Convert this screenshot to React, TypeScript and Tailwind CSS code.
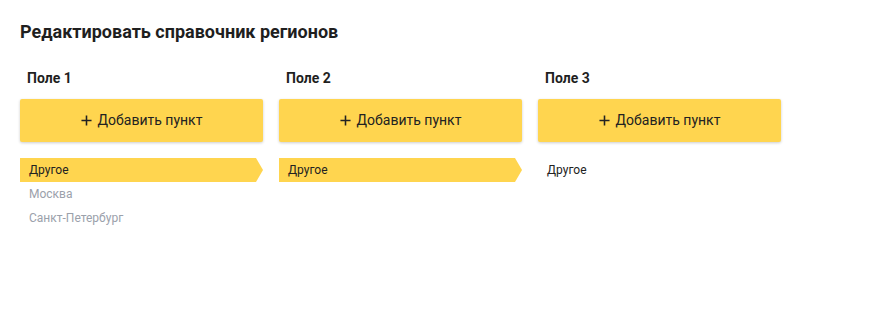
const COLUMNS = [
  { title: "Поле 1", items: ["Другое", "Москва", "Санкт-Петербург"], active: 0 },
  { title: "Поле 2", items: ["Другое"], active: 0 },
  { title: "Поле 3", items: ["Другое"], active: -1 },
];

export default function App() {
  return (
    <div className="min-h-screen bg-white px-5 pt-[21px] font-['Roboto',sans-serif] text-[#1f1f1f]">
      <h1 className="text-[18px] font-bold leading-[22px]">Редактировать справочник регионов</h1>
      <div className="mt-[26px] flex gap-4">
        {COLUMNS.map((col) => (
          <div key={col.title} className="w-[243px]">
            <div className="pl-[7px] text-[14px] font-bold leading-[18px]">{col.title}</div>
            <button className="mt-[12px] flex h-[43px] w-full items-center justify-center gap-[6px] rounded-[2px] bg-[#ffd54f] text-[14px] text-[#222] shadow-[0_1px_3px_rgba(0,0,0,0.2)]">
              <svg className="h-[11px] w-[11px]" viewBox="0 0 12 12" fill="none" stroke="currentColor" strokeWidth={1.7}>
                <path d="M6 0.5v11M0.5 6h11" />
              </svg>
              Добавить пункт
            </button>
            <div className="mt-[16px]">
              {col.items.map((item, i) =>
                i === col.active ? (
                  <div key={item} className="flex h-6 items-center">
                    <div className="flex h-full flex-1 items-center bg-[#ffd54f] pl-[9px] text-[12px] text-[#222]">
                      {item}
                    </div>
                    <svg className="h-6 w-2" viewBox="0 0 8 24" preserveAspectRatio="none">
                      <path d="M0 0h1L8 12 1 24H0z" fill="#ffd54f" />
                    </svg>
                  </div>
                ) : (
                  <div
                    key={item}
                    className={`flex h-6 items-center pl-[9px] text-[12px] ${col.active === -1 ? "text-[#222]" : "text-[#9ba1ab]"}`}
                  >
                    {item}
                  </div>
                )
              )}
            </div>
          </div>
        ))}
      </div>
    </div>
  );
}
